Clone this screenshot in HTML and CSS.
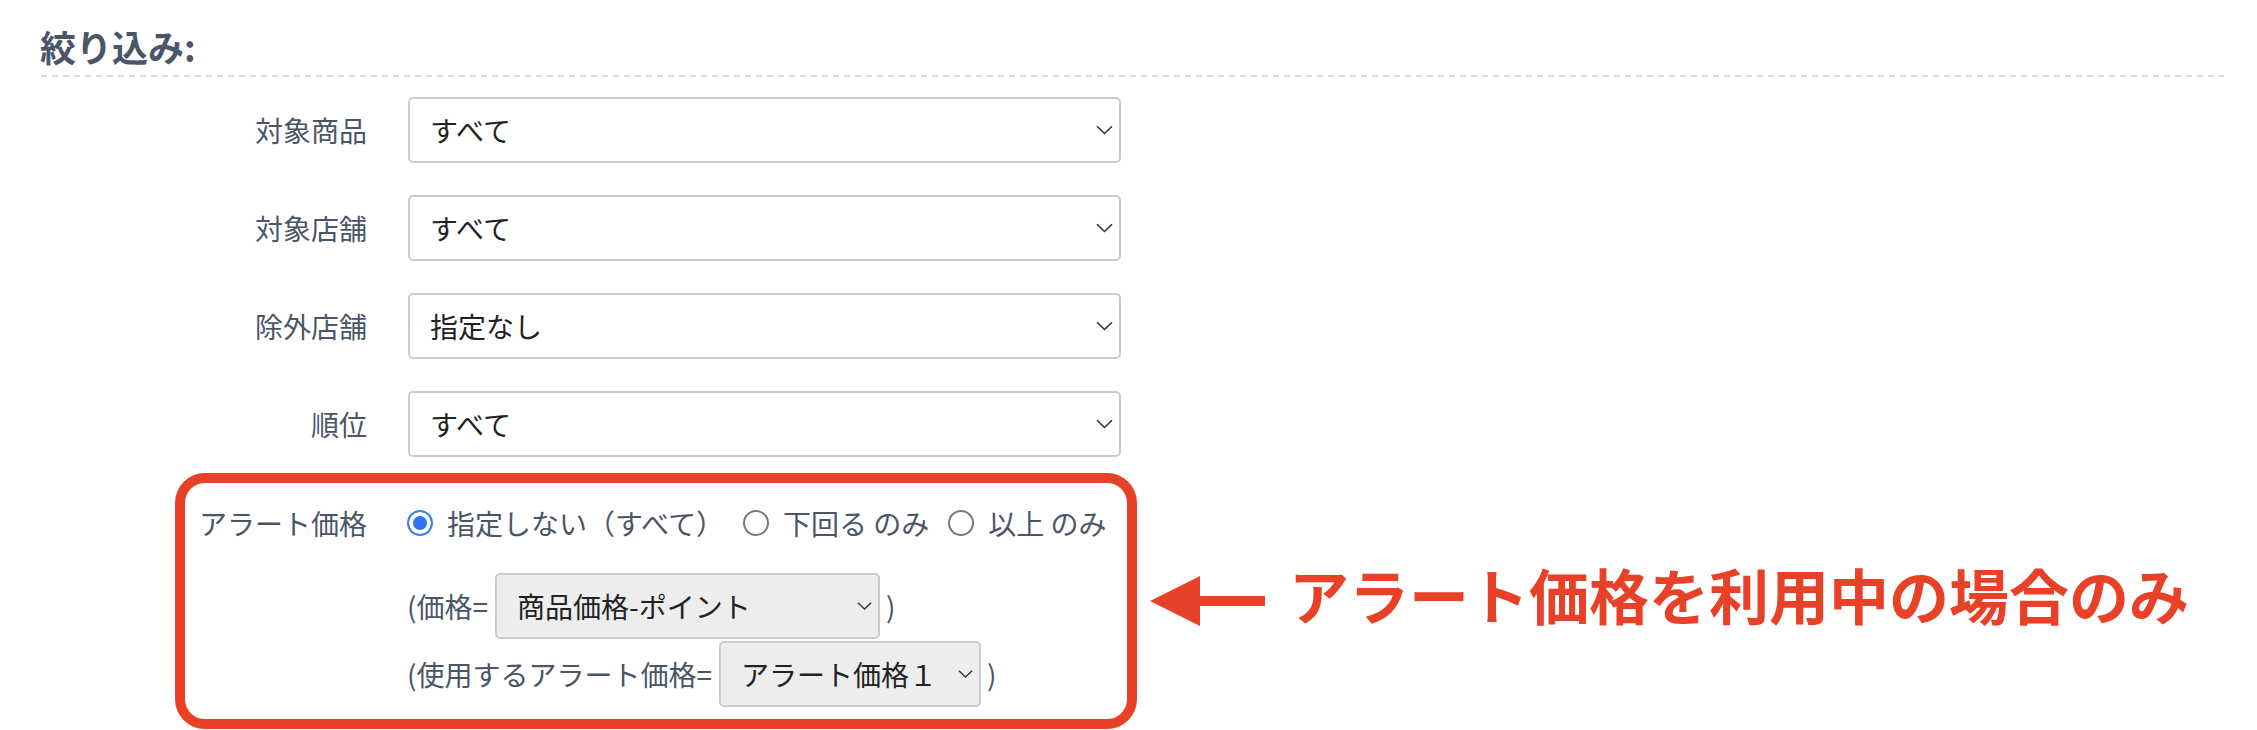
FILE: index.html
```html
<!DOCTYPE html>
<html lang="ja">
<head>
<meta charset="utf-8">
<title>絞り込み</title>
<link rel="stylesheet" href="styles.css">
</head>
<body>
<div class="page">
  <h2 class="section-title">絞り込み:</h2>
  <div class="divider"></div>

  <div class="filters">
    <div class="row">
      <label class="row-label">対象商品</label>
      <span class="select-wrap wide">
        <select class="select"><option>すべて</option></select>
        <svg class="chev" viewBox="0 0 17 10"><path d="M1 1.2 L8.5 8.5 L16 1.2"/></svg>
      </span>
    </div>
    <div class="row">
      <label class="row-label">対象店舗</label>
      <span class="select-wrap wide">
        <select class="select"><option>すべて</option></select>
        <svg class="chev" viewBox="0 0 17 10"><path d="M1 1.2 L8.5 8.5 L16 1.2"/></svg>
      </span>
    </div>
    <div class="row">
      <label class="row-label">除外店舗</label>
      <span class="select-wrap wide">
        <select class="select"><option>指定なし</option></select>
        <svg class="chev" viewBox="0 0 17 10"><path d="M1 1.2 L8.5 8.5 L16 1.2"/></svg>
      </span>
    </div>
    <div class="row">
      <label class="row-label">順位</label>
      <span class="select-wrap wide">
        <select class="select"><option>すべて</option></select>
        <svg class="chev" viewBox="0 0 17 10"><path d="M1 1.2 L8.5 8.5 L16 1.2"/></svg>
      </span>
    </div>
  </div>

  <div class="highlight-row">
    <div class="highlight">
      <div class="hl-label">アラート価格</div>
      <div class="controls">
        <div class="radios">
          <label class="radio-opt"><input type="radio" name="ap" checked><span>指定しない（すべて）</span></label>
          <label class="radio-opt"><input type="radio" name="ap"><span>下回る のみ</span></label>
          <label class="radio-opt"><input type="radio" name="ap"><span>以上 のみ</span></label>
        </div>
        <div class="sub sub-price">
          <span>(価格=</span>
          <span class="select-wrap gray price">
            <select class="select"><option>商品価格-ポイント</option></select>
            <svg class="chev small" viewBox="0 0 17 10"><path d="M1 1.2 L8.5 8.5 L16 1.2"/></svg>
          </span>
          <span>)</span>
        </div>
        <div class="sub sub-alert">
          <span>(使用するアラート価格=</span>
          <span class="select-wrap gray alert">
            <select class="select"><option>アラート価格１</option></select>
            <svg class="chev small" viewBox="0 0 17 10"><path d="M1 1.2 L8.5 8.5 L16 1.2"/></svg>
          </span>
          <span>)</span>
        </div>
      </div>
    </div>
    <div class="note">
      <svg class="arrow" viewBox="0 0 115 50"><polygon points="0,25 50,0 50,20 115,20 115,30 50,30 50,50"/></svg>
      <span class="note-text">アラート価格を利用中の場合のみ</span>
    </div>
  </div>
</div>
</body>
</html>
```

FILE: styles.css
```css
body {
  margin: 0;
  background: #ffffff;
  font-family: "Noto Sans CJK JP", "Noto Sans", sans-serif;
  color: #4a5568;
}

.page {
  padding: 21px 33px 0 40px;
}

.section-title {
  margin: 0;
  font-size: 36px;
  font-weight: 700;
  line-height: 51px;
  color: #4a5568;
}

.divider {
  height: 2px;
  margin-top: 3px;
  margin-left: 1px;
  background: repeating-linear-gradient(to right, #dadada 0 6px, transparent 6px 11px);
}

.filters {
  margin-top: 20px;
  display: flex;
  flex-direction: column;
  gap: 32px;
}

.row {
  display: flex;
  align-items: center;
  gap: 41px;
}

.row-label {
  width: 327px;
  text-align: right;
  font-size: 28px;
  line-height: 40px;
}

.select-wrap {
  position: relative;
  display: inline-block;
}

.select {
  -webkit-appearance: none;
  appearance: none;
  display: block;
  margin: 0;
  height: 66px;
  box-sizing: border-box;
  padding: 0 40px 0 20px;
  font-family: "Noto Sans CJK JP", "Noto Sans", sans-serif;
  font-size: 28px;
  color: #222222;
  background: #ffffff;
  border: 2px solid #cccccc;
  border-radius: 5px;
  outline: none;
}

.wide .select {
  width: 713px;
}

.chev {
  position: absolute;
  right: 8px;
  top: 50%;
  width: 17px;
  height: 10px;
  transform: translateY(-50%);
  fill: none;
  stroke: #333333;
  stroke-width: 1.6;
  pointer-events: none;
}

.chev.small {
  width: 15px;
  height: 9px;
}

.highlight-row {
  display: flex;
  align-items: center;
  margin-top: 16px;
  margin-left: 135px;
}

.highlight {
  width: 962px;
  box-sizing: border-box;
  border: 10px solid #e94128;
  border-radius: 30px;
  padding: 20px 0 12px;
  display: flex;
  align-items: flex-start;
}

.hl-label {
  width: 182px;
  text-align: right;
  font-size: 28px;
  line-height: 40px;
}

.controls {
  margin-left: 40px;
}

.radios {
  display: flex;
  align-items: center;
  height: 40px;
  font-size: 28px;
}

.radio-opt {
  display: flex;
  align-items: center;
  gap: 14px;
  margin-right: 19px;
}

.radio-opt input {
  -webkit-appearance: none;
  appearance: none;
  margin: 0;
  width: 26px;
  height: 26px;
  box-sizing: border-box;
  border-radius: 50%;
  border: 2px solid #7a7a7a;
  background: #ffffff;
}

.radio-opt input:checked {
  border: 2.5px solid #3b82f6;
  background: #2f74f0;
  box-shadow: inset 0 0 0 4px #ffffff;
}

.sub {
  display: flex;
  align-items: center;
  font-size: 28px;
}

.sub-price {
  margin-top: 30px;
}

.sub-alert {
  margin-top: 2px;
}

.sub .select-wrap {
  margin: 0 6px 0 7px;
}

.gray .select {
  background: #ededed;
  padding-left: 20px;
}

.price .select {
  width: 385px;
}

.alert .select {
  width: 262px;
}

.note {
  display: flex;
  align-items: center;
  margin-left: 13px;
  color: #e94128;
}

.arrow {
  width: 115px;
  height: 50px;
  fill: #e94128;
}

.note-text {
  margin-left: 24px;
  font-size: 60px;
  font-weight: 700;
  line-height: 1;
  padding-bottom: 14px;
}
```
